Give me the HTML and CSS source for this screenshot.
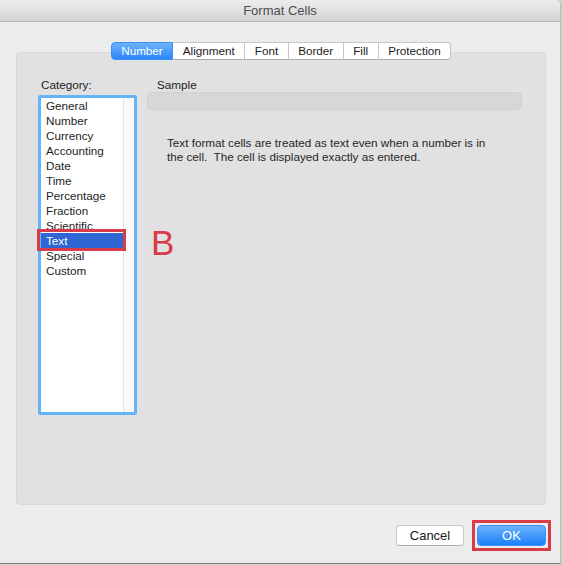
FILE: index.html
```html
<!DOCTYPE html>
<html lang="en">
<head>
    <meta charset="UTF-8">
    <meta name="viewport" content="width=device-width, initial-scale=1.0">
    <title>Format Cells</title>
    <link rel="stylesheet" href="styles.css">
</head>
<body>
    <div class="window">
        <header class="titlebar">Format Cells</header>

        <main class="content">
            <nav class="tabs">
                <span class="tab active">Number</span>
                <span class="tab">Alignment</span>
                <span class="tab">Font</span>
                <span class="tab">Border</span>
                <span class="tab">Fill</span>
                <span class="tab">Protection</span>
            </nav>

            <section class="tab-box">
                <div class="category">
                    <div class="field-label">Category:</div>
                    <div class="list">
                        <ul class="list-items">
                            <li>General</li>
                            <li>Number</li>
                            <li>Currency</li>
                            <li>Accounting</li>
                            <li>Date</li>
                            <li>Time</li>
                            <li>Percentage</li>
                            <li>Fraction</li>
                            <li>Scientific</li>
                            <li class="selected">Text</li>
                            <li>Special</li>
                            <li>Custom</li>
                        </ul>
                        <div class="list-gutter"></div>
                    </div>
                </div>

                <div class="sample-col">
                    <div class="field-label sample-label">Sample</div>
                    <div class="sample-box"></div>
                    <p class="description">
                        Text format cells are treated as text even when a number is in<br>
                        the cell.&nbsp; The cell is displayed exactly as entered.
                    </p>
                </div>

                <span class="mark-letter">B</span>
            </section>

            <div class="buttons">
                <button class="btn">Cancel</button>
                <button class="btn btn-primary">OK</button>
            </div>
        </main>
    </div>
</body>
</html>
```

FILE: styles.css
```css
* {
    margin: 0;
    padding: 0;
    box-sizing: border-box;
}

body {
    background: #cfd3cf;
    font-family: 'Liberation Sans', Arial, sans-serif;
    color: #1d1d1d;
}

.window {
    width: 561px;
    height: 564px;
    background: #ececec;
    border-right: 1px solid #bdbdbd;
    border-bottom: 1px solid #7d7d7d;
    border-top-right-radius: 5px;
    overflow: hidden;
}

.titlebar {
    height: 22px;
    line-height: 22px;
    text-align: center;
    font-size: 13px;
    color: #4d4d4d;
    background: linear-gradient(#ececec, #d4d4d4);
    border-bottom: 1px solid #bababa;
}

.content {
    padding: 20px 14px 0 16px;
}

/* segmented tab control */
.tabs {
    position: relative;
    z-index: 1;
    display: flex;
    justify-content: center;
    height: 18px;
    margin-bottom: -8px;
}

.tab {
    height: 18px;
    line-height: 16px;
    padding: 0 9.5px;
    font-size: 11.7px;
    background: white;
    border: 1px solid #c6c6c6;
    border-bottom-color: #adadad;
    border-left: none;
}

.tab:first-child {
    border-left: 1px solid #c6c6c6;
    border-radius: 4px 0 0 4px;
}

.tab:last-child {
    border-radius: 0 4px 4px 0;
}

.tab.active {
    color: white;
    background: linear-gradient(#6cb3fb, #2a86fa);
    border-color: #3d8ff5;
}

.tab-box {
    position: relative;
    display: flex;
    height: 453px;
    padding: 25px 0 0 21px;
    background: #e1e1e1;
    border: 1px solid #d8d8d8;
    border-radius: 4px;
}

.field-label {
    font-size: 11.7px;
    line-height: 14px;
    padding-left: 3px;
    margin-bottom: 3px;
}

.category {
    width: 99px;
}

.list {
    display: flex;
    height: 320px;
    background: white;
    border: 3px solid #64b4fb;
    border-radius: 2px;
}

.list-items {
    list-style: none;
    width: 82px;
}

.list-items li {
    height: 15px;
    line-height: 15px;
    padding-left: 5px;
    font-size: 11.7px;
}

.list-items li.selected {
    position: relative;
    color: white;
    background: #2e66d3;
}

.list-items li.selected::after {
    content: '';
    position: absolute;
    top: -4px;
    left: -4px;
    right: -3px;
    bottom: -3px;
    border: 3px solid #d73c48;
}

.list-gutter {
    flex: 1;
    background: #f8f8f8;
    border-left: 1px solid #e3e3e3;
}

.sample-col {
    margin-left: 10px;
}

.sample-label {
    padding-left: 10px;
    margin-bottom: 0;
}

.sample-box {
    width: 375px;
    height: 18px;
    background: #d7d7d7;
    border: 1px solid #d1d1d1;
    border-radius: 4px;
}

.description {
    margin-top: 26px;
    padding-left: 20px;
    font-size: 11.7px;
    line-height: 13.5px;
    color: #262626;
}

.mark-letter {
    position: absolute;
    top: 172px;
    left: 134px;
    font-size: 35px;
    line-height: 35px;
    color: #d73c48;
}

.buttons {
    display: flex;
    justify-content: flex-end;
    gap: 13px;
    margin-top: 20px;
}

.btn {
    height: 21px;
    font-family: inherit;
    font-size: 13px;
    color: #1a1a1a;
    background: white;
    border: 1px solid #c7c7c7;
    border-bottom-color: #afafaf;
    border-radius: 4px;
    width: 68px;
}

.btn-primary {
    position: relative;
    width: 69px;
    color: white;
    background: linear-gradient(#6bb2fb, #1c81fb);
    border-color: #3f8ff6;
}

.btn-primary::after {
    content: '';
    position: absolute;
    top: -6px;
    left: -6px;
    right: -6px;
    bottom: -6px;
    border: 3px solid #d73c48;
}
```
